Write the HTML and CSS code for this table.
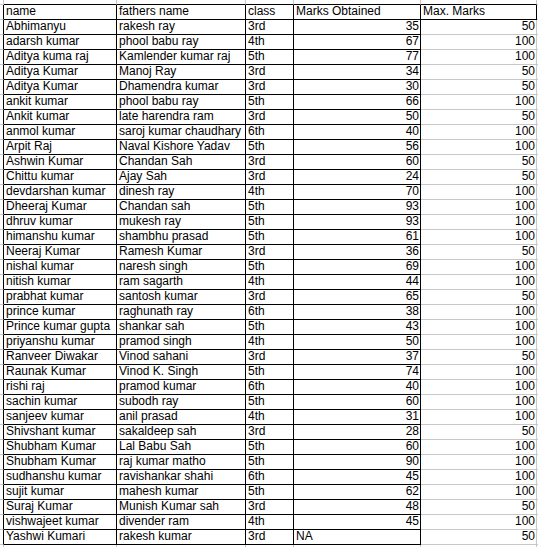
FILE: index.html
```html
<!DOCTYPE html>
<html>
<head>
<meta charset="utf-8">
<link rel="stylesheet" href="styles.css">
</head>
<body>
<div class="sheet">
  <div class="r top"><i class="g"></i><i class="c"></i><i class="c"></i><i class="c"></i><i class="c"></i><i class="c"></i><i class="t"></i></div>
  <div class="r"><i class="g"></i><span class="c">name</span><span class="c">fathers name</span><span class="c">class</span><span class="c">Marks Obtained</span><span class="c h">Max. Marks</span><i class="t"></i></div>
  <div class="r"><i class="g"></i><span class="c">Abhimanyu</span><span class="c">rakesh ray</span><span class="c">3rd</span><span class="c n">35</span><span class="e">50</span><i class="t"></i></div>
  <div class="r"><i class="g"></i><span class="c">adarsh kumar</span><span class="c">phool babu ray</span><span class="c">4th</span><span class="c n">67</span><span class="e">100</span><i class="t"></i></div>
  <div class="r"><i class="g"></i><span class="c">Aditya kuma raj</span><span class="c">Kamlender kumar raj</span><span class="c">5th</span><span class="c n">77</span><span class="e">100</span><i class="t"></i></div>
  <div class="r"><i class="g"></i><span class="c">Aditya Kumar</span><span class="c">Manoj Ray</span><span class="c">3rd</span><span class="c n">34</span><span class="e">50</span><i class="t"></i></div>
  <div class="r"><i class="g"></i><span class="c">Aditya Kumar</span><span class="c">Dhamendra kumar</span><span class="c">3rd</span><span class="c n">30</span><span class="e">50</span><i class="t"></i></div>
  <div class="r"><i class="g"></i><span class="c">ankit kumar</span><span class="c">phool babu ray</span><span class="c">5th</span><span class="c n">66</span><span class="e">100</span><i class="t"></i></div>
  <div class="r"><i class="g"></i><span class="c">Ankit kumar</span><span class="c">late harendra ram</span><span class="c">3rd</span><span class="c n">50</span><span class="e">50</span><i class="t"></i></div>
  <div class="r"><i class="g"></i><span class="c">anmol kumar</span><span class="c">saroj kumar chaudhary</span><span class="c">6th</span><span class="c n">40</span><span class="e">100</span><i class="t"></i></div>
  <div class="r"><i class="g"></i><span class="c">Arpit Raj</span><span class="c">Naval Kishore Yadav</span><span class="c">5th</span><span class="c n">56</span><span class="e">100</span><i class="t"></i></div>
  <div class="r"><i class="g"></i><span class="c">Ashwin Kumar</span><span class="c">Chandan Sah</span><span class="c">3rd</span><span class="c n">60</span><span class="e">50</span><i class="t"></i></div>
  <div class="r"><i class="g"></i><span class="c">Chittu kumar</span><span class="c">Ajay Sah</span><span class="c">3rd</span><span class="c n">24</span><span class="e">50</span><i class="t"></i></div>
  <div class="r"><i class="g"></i><span class="c">devdarshan kumar</span><span class="c">dinesh ray</span><span class="c">4th</span><span class="c n">70</span><span class="e">100</span><i class="t"></i></div>
  <div class="r"><i class="g"></i><span class="c">Dheeraj Kumar</span><span class="c">Chandan sah</span><span class="c">5th</span><span class="c n">93</span><span class="e">100</span><i class="t"></i></div>
  <div class="r"><i class="g"></i><span class="c">dhruv kumar</span><span class="c">mukesh ray</span><span class="c">5th</span><span class="c n">93</span><span class="e">100</span><i class="t"></i></div>
  <div class="r"><i class="g"></i><span class="c">himanshu kumar</span><span class="c">shambhu prasad</span><span class="c">5th</span><span class="c n">61</span><span class="e">100</span><i class="t"></i></div>
  <div class="r"><i class="g"></i><span class="c">Neeraj Kumar</span><span class="c">Ramesh Kumar</span><span class="c">3rd</span><span class="c n">36</span><span class="e">50</span><i class="t"></i></div>
  <div class="r"><i class="g"></i><span class="c">nishal kumar</span><span class="c">naresh singh</span><span class="c">5th</span><span class="c n">69</span><span class="e">100</span><i class="t"></i></div>
  <div class="r"><i class="g"></i><span class="c">nitish kumar</span><span class="c">ram sagarth</span><span class="c">4th</span><span class="c n">44</span><span class="e">100</span><i class="t"></i></div>
  <div class="r"><i class="g"></i><span class="c">prabhat kumar</span><span class="c">santosh kumar</span><span class="c">3rd</span><span class="c n">65</span><span class="e">50</span><i class="t"></i></div>
  <div class="r"><i class="g"></i><span class="c">prince kumar</span><span class="c">raghunath ray</span><span class="c">6th</span><span class="c n">38</span><span class="e">100</span><i class="t"></i></div>
  <div class="r"><i class="g"></i><span class="c">Prince kumar gupta</span><span class="c">shankar sah</span><span class="c">5th</span><span class="c n">43</span><span class="e">100</span><i class="t"></i></div>
  <div class="r"><i class="g"></i><span class="c">priyanshu kumar</span><span class="c">pramod singh</span><span class="c">4th</span><span class="c n">50</span><span class="e">100</span><i class="t"></i></div>
  <div class="r"><i class="g"></i><span class="c">Ranveer Diwakar</span><span class="c">Vinod sahani</span><span class="c">3rd</span><span class="c n">37</span><span class="e">50</span><i class="t"></i></div>
  <div class="r"><i class="g"></i><span class="c">Raunak Kumar</span><span class="c">Vinod K. Singh</span><span class="c">5th</span><span class="c n">74</span><span class="e">100</span><i class="t"></i></div>
  <div class="r"><i class="g"></i><span class="c">rishi raj</span><span class="c">pramod kumar</span><span class="c">6th</span><span class="c n">40</span><span class="e">100</span><i class="t"></i></div>
  <div class="r"><i class="g"></i><span class="c">sachin kumar</span><span class="c">subodh ray</span><span class="c">5th</span><span class="c n">60</span><span class="e">100</span><i class="t"></i></div>
  <div class="r"><i class="g"></i><span class="c">sanjeev kumar</span><span class="c">anil prasad</span><span class="c">4th</span><span class="c n">31</span><span class="e">100</span><i class="t"></i></div>
  <div class="r"><i class="g"></i><span class="c">Shivshant kumar</span><span class="c">sakaldeep sah</span><span class="c">3rd</span><span class="c n">28</span><span class="e">50</span><i class="t"></i></div>
  <div class="r"><i class="g"></i><span class="c">Shubham Kumar</span><span class="c">Lal Babu Sah</span><span class="c">5th</span><span class="c n">60</span><span class="e">100</span><i class="t"></i></div>
  <div class="r"><i class="g"></i><span class="c">Shubham Kumar</span><span class="c">raj kumar matho</span><span class="c">5th</span><span class="c n">90</span><span class="e">100</span><i class="t"></i></div>
  <div class="r"><i class="g"></i><span class="c">sudhanshu kumar</span><span class="c">ravishankar shahi</span><span class="c">6th</span><span class="c n">45</span><span class="e">100</span><i class="t"></i></div>
  <div class="r"><i class="g"></i><span class="c">sujit kumar</span><span class="c">mahesh kumar</span><span class="c">5th</span><span class="c n">62</span><span class="e">100</span><i class="t"></i></div>
  <div class="r"><i class="g"></i><span class="c">Suraj Kumar</span><span class="c">Munish Kumar sah</span><span class="c">3rd</span><span class="c n">48</span><span class="e">50</span><i class="t"></i></div>
  <div class="r"><i class="g"></i><span class="c">vishwajeet kumar</span><span class="c">divender ram</span><span class="c">4th</span><span class="c n">45</span><span class="e">100</span><i class="t"></i></div>
  <div class="r"><i class="g"></i><span class="c">Yashwi Kumari</span><span class="c">rakesh kumar</span><span class="c">3rd</span><span class="c">NA</span><span class="e">50</span><i class="t"></i></div>
  <div class="r bottom"><i class="t"></i><i class="t"></i><i class="t"></i><i class="t"></i><i class="t"></i><i class="t"></i><i class="t"></i></div>
</div>
</body>
</html>
```

FILE: styles.css
```css
html, body {
  margin: 0;
  padding: 0;
  background: #ffffff;
}

.sheet {
  display: grid;
  grid-template-columns: 4px 113px 129px 48px 127px 116px 10px;
  grid-template-rows: 5px repeat(36, 15px) 10px;
  width: 538px;
  height: 547px;
  overflow: hidden;
  font-family: "Liberation Sans", Arial, sans-serif;
  font-size: 12px;
  color: #000000;
}

.r {
  display: contents;
}

.r > * {
  box-sizing: border-box;
  display: block;
  font-style: normal;
  white-space: nowrap;
  overflow: hidden;
  line-height: 13px;
  padding: 0 1px 0 2px;
}

.g {
  border-right: 1px solid #000000;
  border-bottom: 1px solid #c8c8c8;
}

.c {
  border-right: 1px solid #000000;
  border-bottom: 1px solid #000000;
}

.e {
  border-right: 1px solid #c8c8c8;
  border-bottom: 1px solid #c8c8c8;
  text-align: right;
}

.t {
  border-right: 1px solid #c8c8c8;
  border-bottom: 1px solid #c8c8c8;
}

.n {
  text-align: right;
}

.top > * {
  border-right: 1px solid #c8c8c8;
}

.top > .g {
  border-bottom: 1px solid #c8c8c8;
}

.top > .c {
  border-bottom: 1px solid #000000;
}

.bottom > * {
  border-bottom: none;
}
```
